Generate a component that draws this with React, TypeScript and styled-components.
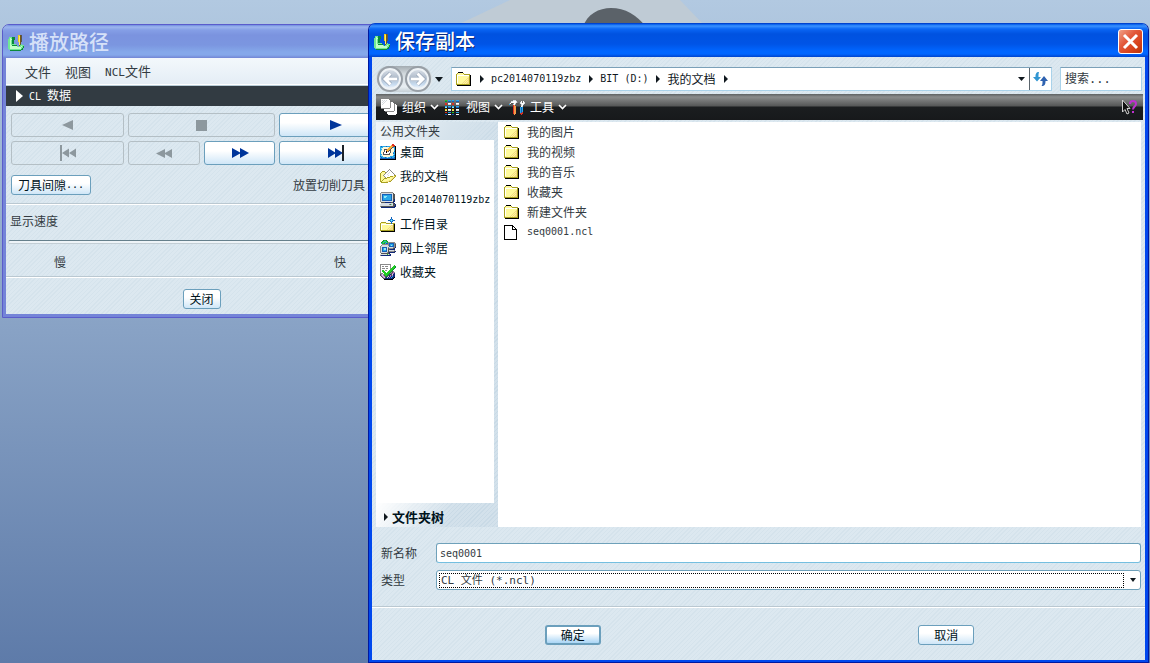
import React from "react";
import styled, { createGlobalStyle, css } from "styled-components";

const CJK = '"Noto Sans CJK SC", sans-serif';
const MONO = '"DejaVu Sans Mono", "Noto Sans CJK SC", monospace';
const hatch = css`
  background: repeating-linear-gradient(135deg, #dce8f0 0 2px, #d5e3ec 2px 3px);
`;

const GlobalStyle = createGlobalStyle`
  * { box-sizing: border-box; }
  body { margin: 0; font: 12px/16px ${CJK}; color: #333b42; }
  button, input, select { font: inherit; color: inherit; margin: 0; }
  button { cursor: pointer; padding: 0; }
  h1, h2, ul { margin: 0; padding: 0; list-style: none; font-weight: normal; }
  svg { display: block; flex: none; }
`;

const Desktop = styled.div`
  position: relative;
  min-height: 100vh;
  overflow: hidden;
  background: linear-gradient(#b2c9e1, #5e7ba9);
`;

const ModelShape = styled.svg`
  position: absolute;
  top: 0;
  left: 453px;
`;

const Latin = styled.span<{ $size?: number }>`
  font-family: ${MONO};
  font-size: ${(p) => p.$size ?? 10}px;
  white-space: pre;
`;

const PathWindow = styled.section`
  position: absolute;
  top: 24px;
  left: 2px;
  width: 399px;
  border: 1px solid #5a5ccb;
  border-radius: 7px 7px 0 0;
  overflow: hidden;
`;

const SaveDialog = styled.section`
  position: absolute;
  top: 23px;
  left: 368px;
  right: 1px;
  bottom: 0;
  display: flex;
  flex-direction: column;
  border: 1px solid #0019a0;
  border-top-color: #0043cf;
  border-radius: 7px 7px 0 0;
  overflow: hidden;
`;

const TitleBar = styled.header<{ $active?: boolean }>`
  display: flex;
  align-items: center;
  gap: 5px;
  height: 33px;
  padding: 2px 5px 0;
  flex: none;
  color: ${(p) => (p.$active ? "#fff" : "#d6e1f8")};
  text-shadow: ${(p) => (p.$active ? "1px 1px #0a2a80" : "none")};
  background: ${(p) =>
    p.$active
      ? "linear-gradient(#0058e8 0, #3a92ff 2px, #0a66f5 5px, #0052e0 10px, #0054e6 20px, #0066ff 27px, #0066ff 30px, #0044cc 33px)"
      : "linear-gradient(#6f8be0 0, #9db6ee 2px, #859fe6 5px, #7b93df 10px, #7b96e0 20px, #85a8ea 27px, #85a8ea 30px, #7285d4 33px)"};
`;

const Title = styled.h1`
  flex: 1;
  padding-bottom: 2px;
  font-size: 20px;
  line-height: 26px;
  font-weight: 500;
`;

const CloseButton = styled.button`
  display: grid;
  place-items: center;
  width: 25px;
  height: 25px;
  border: 1px solid #fff;
  border-radius: 3px;
  background: linear-gradient(135deg, #f0a088, #e2583a 40%, #d8431c 70%, #b8340c);
`;

const PathBody = styled.div`
  border: solid #7484d8;
  border-width: 0 3px 3px;
  ${hatch}
`;

const MenuBar = styled.nav`
  display: flex;
  gap: 14px;
  height: 28px;
  padding: 0 19px;
  background: linear-gradient(#f3f8fc, #e4edf5);
  border-bottom: 1px solid #b9cdd8;
  box-shadow: inset 0 -1px #fff;
`;

const MenuButton = styled.button`
  border: 0;
  background: none;
  font-size: 13px;
  white-space: nowrap;
`;

const SectionHead = styled.button`
  display: flex;
  align-items: center;
  gap: 6px;
  width: 100%;
  height: 20px;
  padding: 0 10px;
  border: 0;
  color: #fff;
  background: #323b42;
`;

const PlayerGrid = styled.div`
  display: grid;
  grid-template-columns: 1fr 72px 71px 1fr;
  grid-template-rows: 24px 24px;
  gap: 4px;
  padding: 7px 5px 10px;
`;

const Button = styled.button<{ $wide?: boolean; $w?: number; $primary?: boolean }>`
  display: flex;
  align-items: center;
  justify-content: center;
  grid-column: ${(p) => (p.$wide ? "span 2" : "auto")};
  width: ${(p) => (p.$w ? `${p.$w}px` : "auto")};
  height: ${(p) => (p.$w ? "20px" : "auto")};
  color: #00131c;
  border: ${(p) => (p.$primary ? 2 : 1)}px solid #6b9fbc;
  border-radius: 3px;
  background: linear-gradient(#fff 40%, ${(p) => (p.$primary ? "#a9d5f5" : "#cfe6f7")});
  &:disabled {
    border-color: #b4bfc5;
    background: transparent;
    cursor: default;
  }
`;

const ClearanceRow = styled.div`
  display: flex;
  align-items: center;
  justify-content: space-between;
  padding: 0 32px 8px 5px;
`;

const Rule = styled.hr`
  flex: none;
  width: 100%;
  height: 2px;
  margin: 0;
  border: 0;
  border-top: 1px solid #bac8d1;
  background: #fff;
`;

const SpeedLabel = styled.label`
  display: block;
  padding: 8px 4px 5px;
`;

const SpeedSlider = styled.input`
  display: block;
  appearance: none;
  width: calc(100% - 4px);
  height: 16px;
  margin: 0 2px;
  background: transparent;
  &::-webkit-slider-runnable-track {
    height: 4px;
    border: 1px solid #c3ced5;
    border-top: 1px solid #66808c;
    border-radius: 2px;
    background: #eef4f8;
  }
  &::-webkit-slider-thumb {
    appearance: none;
    width: 9px;
    height: 14px;
    margin-top: -6px;
    border: 1px solid #6b9fbc;
    border-radius: 3px;
    background: #fff;
  }
`;

const SpeedScale = styled.div`
  display: flex;
  justify-content: space-between;
  padding: 4px 51px 6px 48px;
`;

const PathFooter = styled.footer`
  display: flex;
  justify-content: center;
  padding: 11px 0 5px;
`;

const DialogBody = styled.div`
  display: flex;
  flex-direction: column;
  flex: 1;
  min-height: 0;
  border: solid #0048ee;
  border-width: 0 3px 2px;
  ${hatch}
`;

const NavRow = styled.div`
  display: flex;
  align-items: center;
  padding: 9px 3px 2px 4px;
  height: 37px;
`;

const RoundPair = styled.div`
  display: flex;
  gap: 2px;
  padding: 0 1px;
  border-radius: 14px;
  background: linear-gradient(#a3abb1, #d3dade 30%, #e8eef2 80%, #c6d0d6);
`;

const RoundButton = styled.button`
  display: grid;
  place-items: center;
  width: 26px;
  height: 26px;
  border: 2px solid #989fa6;
  border-radius: 50%;
  box-shadow: inset 0 0 0 2px #eff3f6;
  background: linear-gradient(#dfe5ec, #b0bccb 45%, #c8dcf0 75%, #fff);
`;

const PlainButton = styled.button<{ $w?: number }>`
  display: flex;
  align-items: center;
  justify-content: center;
  width: ${(p) => (p.$w ? `${p.$w}px` : "auto")};
  height: 22px;
  flex: none;
  border: 0;
  background: none;
  white-space: nowrap;
  color: #10181e;
`;

const AddressBar = styled.nav`
  display: flex;
  align-items: center;
  gap: 8px;
  flex: 1;
  height: 24px;
  margin: 0 8px 0 6px;
  padding-left: 4px;
  border: 1px solid #a9d2ea;
  border-top-color: #7ba0b8;
  background: #fff;
`;

const AddressTools = styled.div`
  display: flex;
  margin-left: auto;
`;

const RefreshButton = styled(PlainButton)`
  border-left: 1px solid #5a646c;
`;

const SearchBox = styled.input`
  width: 82px;
  height: 24px;
  padding: 0 4px;
  border: 1px solid #a9d2ea;
  border-top-color: #7ba0b8;
  border-radius: 0;
  background: #fff;
  font-family: ${MONO};
  &::placeholder {
    color: #333b42;
    opacity: 1;
  }
`;

const ToolBar = styled.div`
  display: flex;
  align-items: center;
  gap: 6px;
  height: 26px;
  margin: 0 2px 2px 4px;
  padding: 0 4px 0 5px;
  flex: none;
  background: linear-gradient(#5d6163 0, #8a8c8c 3px, #555757 12px, #1b1e20 13px, #17191b);
`;

const ToolButton = styled.button`
  display: flex;
  align-items: center;
  gap: 4px;
  border: 0;
  background: none;
  color: #fff;
  & > :first-child {
    margin-right: 1px;
  }
`;

const HelpButton = styled(PlainButton)`
  margin-left: auto;
`;

const Browser = styled.div`
  display: flex;
  flex: 1;
  min-height: 0;
  margin: 0 4px;
`;

const Sidebar = styled.aside`
  display: flex;
  flex-direction: column;
  width: 122px;
  flex: none;
  background: repeating-linear-gradient(135deg, #d3e1eb 0 2px, #c9dae6 2px 3px);
`;

const SidebarHead = styled.h2`
  height: 18px;
  padding: 0 4px;
  font-size: 12px;
  line-height: 18px;
  background: linear-gradient(120deg, #f0f5f9, #d6e3ec 60%, transparent);
`;

const SidebarList = styled.ul`
  flex: 1;
  margin-right: 4px;
  background: #fff;
`;

const SidebarItem = styled.button`
  display: flex;
  align-items: center;
  gap: 4px;
  width: 100%;
  height: 24px;
  padding: 0 4px;
  border: 0;
  background: none;
  color: #00131c;
  white-space: nowrap;
`;

const TreeToggle = styled.button`
  display: flex;
  align-items: center;
  gap: 4px;
  height: 24px;
  padding: 3px 8px 0;
  border: 0;
  background: linear-gradient(120deg, #fff, transparent 60%);
  color: #00131c;
  font-weight: bold;
  font-size: 13px;
`;

const FileList = styled.ul`
  flex: 1;
  overflow: hidden;
  background: #fff;
`;

const FileRow = styled.li`
  display: grid;
  grid-template-columns: 16px 1fr;
  align-items: center;
  gap: 7px;
  height: 20px;
  padding: 0 6px;
`;

const Form = styled.form`
  display: grid;
  grid-template-columns: 46px 1fr;
  align-items: center;
  row-gap: 7px;
  column-gap: 9px;
  padding: 16px 4px 16px 9px;
`;

const fieldBox = css`
  height: 20px;
  border: 1px solid #6fa1ba;
  border-radius: 3px;
  background: #fff;
`;

const NameField = styled.input`
  ${fieldBox}
  min-width: 0;
  padding: 0 3px;
  border-bottom-color: #74bfe0;
  font: 10px/16px ${MONO};
`;

const TypeBox = styled.div`
  ${fieldBox}
  display: flex;
  align-items: center;
  padding: 0 4px 0 2px;
  gap: 6px;
`;

const TypeSelect = styled.select`
  flex: 1;
  min-width: 0;
  height: 15px;
  padding: 0 1px;
  appearance: none;
  border: 1px dotted #000;
  border-radius: 0;
  background: #fff;
  font: 11px/13px ${MONO};
`;

const DialogFooter = styled.footer`
  display: flex;
  justify-content: space-around;
  padding: 17px 12px 15px 14px;
`;

type Palette = Record<string, string>;

/* Draws a small bitmap icon from rows of palette letters; dots stay clear. */
function PixelIcon({ rows, palette }: { rows: string[]; palette: Palette }) {
  const w = Math.max(...rows.map((r) => r.length));
  return (
    <svg width={w} height={rows.length} shapeRendering="crispEdges" aria-hidden>
      {rows.flatMap((row, y) =>
        [...row].map((c, x) =>
          palette[c] ? <rect key={`${x}-${y}`} x={x} y={y} width={1} height={1} fill={palette[c]} /> : null
        )
      )}
    </svg>
  );
}

const COLORS: Palette = {
  K: "#000000", W: "#ffffff", G: "#0a8a3a", g: "#6fe894", l: "#c2ffc8", Y: "#f0c818", y: "#fff060",
  o: "#7a5a10", O: "#a8a020", F: "#fffa9c", f: "#f3da84", s: "#8a8a8a", S: "#555555", B: "#1560b8",
  b: "#28a8e8", c: "#90e8f8", R: "#e03020", n: "#f59a48", N: "#102878", t: "#d6dbe0", L: "#22cc22", p: "#b070c8",
  e: "#fff8d8",
};

const APP = [
  "..........YYoS..",
  "..........YyoS..",
  ".gggGGG...YyoS..",
  ".glgGGG...YyoS..",
  "ggllGGG...YyoS..",
  "gglgGG....YyoS..",
  "gglgGG....YyoS..",
  "gglgGG.....yo...",
  "gglgGG.....yo...",
  "gglggggg...ySg..",
  "ggllGGGGG..ogggg",
  "gglllllllg.gglgG",
  "gglllllllllllggG",
  "gglllllllllllgG.",
  ".ggggggggggggGG.",
  "..GGGGGGGGGGG...",
];

const FOLDER = [
  "..KKKKK.........",
  ".OFFFFFO........",
  "OFFFFFFFOOOOOO..",
  "OWWWWWWWWWWWWOK.",
  "OWFFFFFFFFFFFOK.",
  "OWFFFFFFFFFFfOK.",
  "OWFFFFFFFFFffOK.",
  "OWFFFFFFFFfFfOK.",
  "OWFFFFFFFfFffOK.",
  "OWFFFFFFfFfFfOK.",
  "OWFFFFFfFfFffOK.",
  "OFFFFFfFfFfffOK.",
  "OOOOOOOOOOOOOOK.",
  ".KKKKKKKKKKKKKK.",
];

const FILE = [
  "KKKKKKKKK....",
  "KWWWWWWWKK...",
  "KWWWWWWWKWK..",
  "KWWWWWWWKWWK.",
  "KWWWWWWWKKKKK",
  "KWWWWWWWWWWWK",
  "KWWWWWWWWWWWK",
  "KWWWWWWWWWWWK",
  "KWWWWWWWWWWWK",
  "KWWWWWWWWWWWK",
  "KWWWWWWWWWWWK",
  "KWWWWWWWWWWWK",
  "KWWWWWWWWWWWK",
  "KWWWWWWWWWWWK",
  "KKKKKKKKKKKKK",
];

const DESK = [
  "............RR..",
  "...........nRRR.",
  "bBbbbbBbbbnYnRSK",
  "bbbeeeeeenYnSbbK",
  "bceeeeeenYnSeebK",
  "bbeeSSSnYnSeeebK",
  "bceeSWnYnSSeeebK",
  "beeeSWKnSWSeeeBK",
  "beeSWWKWWWSeebbK",
  "beeSWWWWWSeeeBbK",
  "bbeSSSSSSSeeecbK",
  "bceeeeeeeeeeebBK",
  "BbbeeeeeeebbbbbK",
  "bBbbbBbcbbbBbbBK",
  "BBBBBBBBBBBBBBBK",
  "KKKKKKKKKKKKKKKK",
];

const DOCS = [
  ".........s......",
  "........sWs.....",
  "..OOO..sWWWs....",
  ".OFFFOsWWtWWs...",
  "OFFFFsWWtWWWWs..",
  "OFFFsWWtWWWWWWs.",
  "OFFsWWWWtWWWWWOO",
  "OFFFsWWWWWOOOFfO",
  "OFFFFsWOOOFFFfO.",
  "OFFFOOOFFFFFfO..",
  "OFFOFFFFFFFfO...",
  "OFOFFFFFFffO....",
  "OOFFFFfffOO.....",
  ".OOOOOOO........",
];

const PC = [
  ".ssssssssssss...",
  "sttttttttttttS..",
  "stBBBBBBBBBBtSS.",
  "stBbbbbbbbbBtSS.",
  "stBbcccbbbbBtSS.",
  "stBbccbbbbbBtSS.",
  "stBbbbbbbbbBtSS.",
  "stBbbbbbbbbBtSN.",
  "stBBBBBBBBBBtSN.",
  "sttttttttttttNN.",
  ".SSSSNNNNNNSSN..",
  ".ttttttttttttSN.",
  "tttttttttsSgtSSN",
  "tttttttttttttSSN",
  "sSSSSSSSSSSSSSNN",
  ".NNNNNNNNNNNNNN.",
];

const WORK = [
  "...........B....",
  "...........B....",
  "..........BbB...",
  "........BBbcbBB.",
  "..........BbB...",
  ".OOOOO.....B....",
  "OFFFFFOOOOOBOOO.",
  "OWWWWWWWWWWWWOK.",
  "OWFFFFFFFFFffOK.",
  "OWFFFFFFFFfFfOK.",
  "OWFFFFFFFfFffOK.",
  "OWFFFFFFfFfffOK.",
  "OWFFFFFfFffffOK.",
  "OOOOOOOOOOOOOOK.",
  ".KKKKKKKKKKKKKK.",
];

const NET = [
  "...GLLG.........",
  "..GLbbLG........",
  ".GLbLLbLsssssss.",
  ".bLLGbBBsBBBBBss",
  "..sssssssBbbbBsS",
  ".sttttttsBbcbBsS",
  "sttttttttBBBBBsS",
  "stBBBBBtsttttssN",
  "stBbccBtSssssSN.",
  "stBbccBtSSNNNNN.",
  "stBbbbBtSttttts.",
  "stBBBBBtSsssssSN",
  "sttttttsSNNNNNN.",
  ".SSSSSSSSN......",
  "tttttttLtsN.....",
  "sNNNNNNNNNN.....",
];

const FAV = [
  "sssssssssss.....",
  "sWWWWWWWWWs...L.",
  "sWssWsssWWs..LLG",
  "sWWWWWWWWWs.LLLG",
  "sWsssWssWWsLLLG.",
  "sWWWWWWWWWLLLG..",
  "sWLLWssWWLLLG...",
  "sWLLLWWWLLLGSs..",
  "sWWLLLWLLLGsSps.",
  "sssWLLLLLGsSppN.",
  "SptsLLLLGSNStNN.",
  "SptpSLLGSNpSpNN.",
  ".SptpSGStNpNbNN.",
  "..SptSNtNpNbNNK.",
  "...SSNNNNNNNNK..",
  "....KKKKKKKKK...",
];

const PAGES = [
  "WWWWWWWW........",
  "WtWtWtWWW.......",
  "WWtWtWWWW.......",
  "WtWtWWWWWsWW....",
  "WWtWWWWWWsWWW...",
  "WtWWWWWWWsWWWsW.",
  "WWWWWWWWWsWWWsWW",
  "WWWWWWWWWsWWWsWW",
  "WWWWWWWWWsWWWsWW",
  "sssssssssWWWWsWW",
  "...WWWWWWWWWWsWW",
  "...WWWWWWWWWWsWW",
  "....sssssssssWWW",
  "......WWWWWWWWWW",
  "......WWWWWWWWWW",
  ".......WWWWWWWW.",
];

const GRID = [
  "LL.bbb.bb..bbb..",
  "GG.BBB.BB..BBB..",
  "................",
  "RR.WWW.RR..WWW..",
  "RR.ttt.RR..ttt..",
  "................",
  "bb.bbb.bb..bbb..",
  "cc.BBB.cc..BBB..",
  "................",
  "YY.WWW.YY..WWW..",
  "yy.ttt.yy..ttt..",
  "................",
  "RR.bbb.LL..bbb..",
  "................",
  "BB.WWW.BB..WWW..",
];

const TOOLS = [
  "....ttt.........",
  "..ttWWWt....W.W.",
  ".sWWWWWts..tW.Wt",
  "sWSSsWtSSS.tWWWt",
  "bS..tWs.SS..tWt.",
  "....RnS.....tW..",
  "....Rnn.....Wt..",
  "....Rnn....bBb..",
  "....Rnn....bBb..",
  "....Rnn....bBb..",
  "....Rnn....bBb..",
  "....Rnn....bBb..",
  "....Rnn....bBR..",
  "....Rnn....RRR..",
  ".....n......R...",
];

const Icon = ({ rows }: { rows: string[] }) => <PixelIcon rows={rows} palette={COLORS} />;

const Glyph = ({ d, w, h, fill = "#10181e" }: { d: string; w: number; h: number; fill?: string }) => (
  <svg width={w} height={h} overflow="visible" aria-hidden>
    <path d={d} fill={fill} />
  </svg>
);

const Sep = () => <Glyph w={3} h={8} d="M0 0 4 4 0 8Z" />;
const Down = () => <Glyph w={8} h={5} d="M0 0H8L4 5Z" />;
const Chevron = () => (
  <svg width="9" height="6" aria-hidden>
    <path d="M1 1 4.5 4.5 8 1" fill="none" stroke="#fff" strokeWidth="1.6" />
  </svg>
);

const GRAY = "#8d989e";
const BLUE = "#00359a";

const Arrow = ({ back }: { back?: boolean }) => (
  <svg width="18" height="18" viewBox="0 0 18 18" aria-hidden>
    <path
      d={back ? "M9.500 3.500 4 9 9.500 14.500M4.500 9H16" : "M8.500 3.500 14 9 8.500 14.500M13.500 9H2"}
      fill="none"
      stroke="#8d9cb0"
      strokeWidth="4.2"
    />
    <path
      d={back ? "M9.500 3.500 4 9 9.500 14.500M4.500 9H16" : "M8.500 3.500 14 9 8.500 14.500M13.500 9H2"}
      fill="none"
      stroke="#fff"
      strokeWidth="3"
    />
  </svg>
);

const places = [
  { icon: DESK, label: "桌面" },
  { icon: DOCS, label: "我的文档" },
  { icon: PC, label: "pc2014070119zbz", latin: true },
  { icon: WORK, label: "工作目录" },
  { icon: NET, label: "网上邻居" },
  { icon: FAV, label: "收藏夹" },
];

const folders = ["我的图片", "我的视频", "我的音乐", "收藏夹", "新建文件夹"];

function PlayPath() {
  return (
    <PathWindow>
      <TitleBar>
        <Icon rows={APP} />
        <Title>播放路径</Title>
      </TitleBar>
      <PathBody>
        <MenuBar>
          <MenuButton>文件</MenuButton>
          <MenuButton>视图</MenuButton>
          <MenuButton><Latin $size={11}>NCL</Latin>文件</MenuButton>
        </MenuBar>
        <SectionHead>
          <Glyph w={7} h={12} d="M0 0 7 6 0 12Z" fill="#fff" />
          <span><Latin>CL </Latin>数据</span>
        </SectionHead>
        <PlayerGrid>
          <Button disabled aria-label="反向播放"><Glyph w={11} h={10} d="M11 0V10L0 5Z" fill={GRAY} /></Button>
          <Button disabled $wide aria-label="停止"><Glyph w={11} h={11} d="M0 0H11V11H0Z" fill={GRAY} /></Button>
          <Button aria-label="播放"><Glyph w={11} h={10} d="M0 0 12 5 0 10Z" fill={BLUE} /></Button>
          <Button disabled aria-label="到开头"><Glyph w={16} h={16} d="M0 0H2V16H0ZM9 3.500V12.500L2 8ZM16 3.500V12.500L9 8Z" fill={GRAY} /></Button>
          <Button disabled aria-label="快退"><Glyph w={16} h={9} d="M9 0V9L0 4.500ZM16 0V9L8 4.500Z" fill={GRAY} /></Button>
          <Button aria-label="快进"><Glyph w={16} h={10} d="M0 0 9 5 0 10ZM8 0 17 5 8 10Z" fill={BLUE} /></Button>
          <Button aria-label="到结尾">
            <svg width="16" height="16" aria-hidden>
              <path d="M0 3 8 8 0 13ZM7 3 15 8 7 13Z" fill={BLUE} />
              <path d="M14 0H16V16H14Z" fill="#1c2228" />
            </svg>
          </Button>
        </PlayerGrid>
        <ClearanceRow>
          <Button $w={80}>刀具间隙<Latin>...</Latin></Button>
          <span>放置切削刀具</span>
        </ClearanceRow>
        <Rule />
        <SpeedLabel htmlFor="speed">显示速度</SpeedLabel>
        <SpeedSlider id="speed" type="range" defaultValue={100} />
        <SpeedScale>
          <span>慢</span>
          <span>快</span>
        </SpeedScale>
        <Rule />
        <PathFooter>
          <Button $w={38}>关闭</Button>
        </PathFooter>
      </PathBody>
    </PathWindow>
  );
}

function SaveCopy() {
  return (
    <SaveDialog role="dialog" aria-label="保存副本">
      <TitleBar $active>
        <Icon rows={APP} />
        <Title>保存副本</Title>
        <CloseButton aria-label="关闭窗口">
          <svg width="17" height="17" aria-hidden>
            <path d="M2 2 15 15M15 2 2 15" stroke="#fff" strokeWidth="3" />
          </svg>
        </CloseButton>
      </TitleBar>
      <DialogBody>
        <NavRow>
          <RoundPair>
            <RoundButton aria-label="后退"><Arrow back /></RoundButton>
            <RoundButton aria-label="前进"><Arrow /></RoundButton>
          </RoundPair>
          <PlainButton $w={13} aria-label="历史记录"><Down /></PlainButton>
          <AddressBar>
            <Icon rows={FOLDER} />
            <Sep />
            <PlainButton><Latin>pc2014070119zbz</Latin></PlainButton>
            <Sep />
            <PlainButton><Latin>BIT (D:)</Latin></PlainButton>
            <Sep />
            <PlainButton>我的文档</PlainButton>
            <Sep />
            <AddressTools>
              <PlainButton $w={15} aria-label="展开地址"><Glyph w={7} h={4} d="M0 0H7L3.500 4Z" /></PlainButton>
              <RefreshButton $w={22} aria-label="刷新">
                <svg width="15" height="14" aria-hidden>
                  <path d="M6 0C3 0 2.500 2 2.500 5H0L4 9.500 8 5H5.500C5.500 3 5.500 1.500 6 0Z" fill="#3296d2" />
                  <path d="M8.500 14C12 14 12.500 12 12.500 9H15L11 4 7 9H9.500C9.500 11 9.500 13 8.500 14Z" fill="#2f62b0" />
                </svg>
              </RefreshButton>
            </AddressTools>
          </AddressBar>
          <SearchBox aria-label="搜索" placeholder="搜索..." />
        </NavRow>
        <ToolBar>
          <ToolButton><Icon rows={PAGES} /><span>组织</span><Chevron /></ToolButton>
          <ToolButton><Icon rows={GRID} /><span>视图</span><Chevron /></ToolButton>
          <ToolButton><Icon rows={TOOLS} /><span>工具</span><Chevron /></ToolButton>
          <HelpButton $w={20} aria-label="帮助">
            <svg width="17" height="17" aria-hidden>
              <path d="M1.500 1V13L4 10.500 6 15 8 14 6 9.500H9Z" fill="#111" stroke="#d0d0d0" />
              <path d="M9 5C9 1 15 1 15 5C15 7.500 12 7.500 12 10.500M12 12V14" fill="none" stroke="#c030d0" strokeWidth="2" />
            </svg>
          </HelpButton>
        </ToolBar>
        <Browser>
          <Sidebar>
            <SidebarHead>公用文件夹</SidebarHead>
            <SidebarList>
              {places.map((p) => (
                <li key={p.label}>
                  <SidebarItem>
                    <Icon rows={p.icon} />
                    {p.latin ? <Latin>{p.label}</Latin> : p.label}
                  </SidebarItem>
                </li>
              ))}
            </SidebarList>
            <TreeToggle><Glyph w={4} h={8} d="M0 0 4 4 0 8Z" />文件夹树</TreeToggle>
          </Sidebar>
          <FileList>
            {folders.map((name) => (
              <FileRow key={name}><Icon rows={FOLDER} />{name}</FileRow>
            ))}
            <FileRow><Icon rows={FILE} /><Latin>seq0001.ncl</Latin></FileRow>
          </FileList>
        </Browser>
        <Form onSubmit={(e) => e.preventDefault()}>
          <label htmlFor="name">新名称</label>
          <NameField id="name" defaultValue="seq0001" />
          <label htmlFor="type">类型</label>
          <TypeBox>
            <TypeSelect id="type"><option>CL 文件 (*.ncl)</option></TypeSelect>
            <Glyph w={6} h={4} d="M0 0H6L3 4Z" />
          </TypeBox>
        </Form>
        <Rule />
        <DialogFooter>
          <Button $w={56} $primary>确定</Button>
          <Button $w={56}>取消</Button>
        </DialogFooter>
      </DialogBody>
    </SaveDialog>
  );
}

export default function App() {
  return (
    <Desktop>
      <GlobalStyle />
      <ModelShape width="250" height="40" aria-hidden>
        <path d="M0 27 57 0H227L249 23V40H0Z" fill="#bfcbd5" />
        <path d="M130 27C134 14 146 8 158 8C172 8 184 15 193 27Z" fill="#5b6269" />
      </ModelShape>
      <PlayPath />
      <SaveCopy />
    </Desktop>
  );
}
